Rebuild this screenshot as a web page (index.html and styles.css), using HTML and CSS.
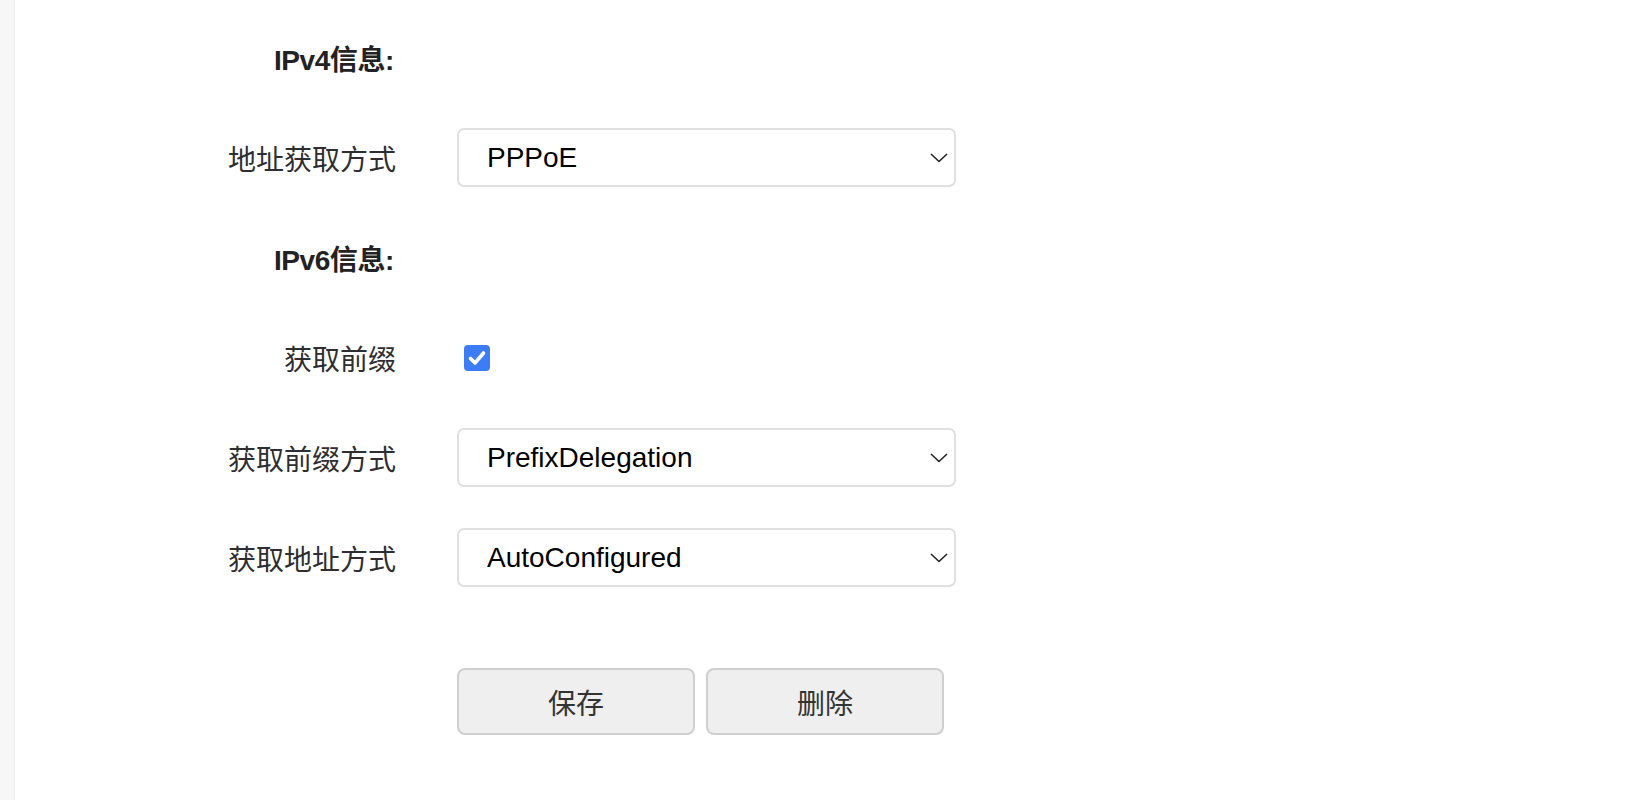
FILE: index.html
```html
<!DOCTYPE html>
<html lang="zh-CN">
<head>
<meta charset="utf-8">
<title>WAN 设置</title>
<link rel="stylesheet" href="styles.css">
</head>
<body>
<div class="panel">
  <form class="form">
    <div class="row">
      <div class="label heading">IPv4信息:</div>
    </div>
    <div class="row">
      <div class="label">地址获取方式</div>
      <div class="select-wrap">
        <select class="select"><option>PPPoE</option></select>
        <svg class="chevron" width="18" height="10" viewBox="0 0 18 10"><path d="M1 1 L9 8.5 L17 1" fill="none" stroke="#222" stroke-width="1.6"/></svg>
      </div>
    </div>
    <div class="row">
      <div class="label heading">IPv6信息:</div>
    </div>
    <div class="row">
      <div class="label">获取前缀</div>
      <span class="checkbox" role="checkbox" aria-checked="true">
        <svg width="26" height="26" viewBox="0 0 26 26"><rect width="26" height="26" rx="4" fill="#3c7cf5"/><path d="M6.5 13.5 L11 18 L19.5 8" fill="none" stroke="#fff" stroke-width="3.6" stroke-linecap="round" stroke-linejoin="round"/></svg>
      </span>
    </div>
    <div class="row">
      <div class="label">获取前缀方式</div>
      <div class="select-wrap">
        <select class="select"><option>PrefixDelegation</option></select>
        <svg class="chevron" width="18" height="10" viewBox="0 0 18 10"><path d="M1 1 L9 8.5 L17 1" fill="none" stroke="#222" stroke-width="1.6"/></svg>
      </div>
    </div>
    <div class="row">
      <div class="label">获取地址方式</div>
      <div class="select-wrap">
        <select class="select"><option>AutoConfigured</option></select>
        <svg class="chevron" width="18" height="10" viewBox="0 0 18 10"><path d="M1 1 L9 8.5 L17 1" fill="none" stroke="#222" stroke-width="1.6"/></svg>
      </div>
    </div>
    <div class="row actions">
      <div class="label"></div>
      <div class="buttons">
        <button type="button" class="btn">保存</button>
        <button type="button" class="btn">删除</button>
      </div>
    </div>
  </form>
</div>
</body>
</html>
```
FILE: styles.css
```css
html, body {
  margin: 0;
  padding: 0;
}
body {
  background: #f7f7f7;
  font-family: "Liberation Sans", "Noto Sans CJK SC", sans-serif;
  color: #303030;
  overflow: hidden;
}
.panel {
  margin-left: 15px;
  background: #fff;
  min-height: 800px;
  box-shadow: 0 0 3px rgba(0, 0, 0, 0.09);
}
.form {
  display: flex;
  flex-direction: column;
  gap: 41px;
  padding-top: 28px;
}
.row {
  display: flex;
  align-items: center;
  height: 59px;
}
.label {
  width: 381px;
  flex: none;
  margin-right: 61px;
  text-align: right;
  font-size: 28px;
  color: #2e2e30;
  font-family: "Liberation Sans", "Noto Sans CJK SC", sans-serif;
}
.heading {
  font-weight: bold;
  color: #222;
  letter-spacing: -0.4px;
  padding-right: 2px;
  box-sizing: border-box;
}
.select-wrap {
  position: relative;
  width: 499px;
  height: 59px;
}
.select {
  appearance: none;
  -webkit-appearance: none;
  width: 100%;
  height: 100%;
  box-sizing: border-box;
  border: 2px solid #e0e0e0;
  border-radius: 7px;
  background: #fff;
  padding: 0 40px 0 28px;
  font-family: "Liberation Sans", sans-serif;
  font-size: 28px;
  color: #000;
  outline: none;
}
.chevron {
  position: absolute;
  right: 8px;
  top: 25px;
  pointer-events: none;
}
.checkbox {
  display: flex;
  width: 26px;
  height: 26px;
  margin-left: 7px;
}
.actions {
  margin-top: 40px;
  height: 67px;
}
.buttons {
  display: flex;
  gap: 11px;
}
.btn {
  width: 238px;
  height: 67px;
  box-sizing: border-box;
  background: #efefef;
  border: 2px solid #cfcfcf;
  border-radius: 8px;
  font-family: "Noto Sans CJK SC", sans-serif;
  font-size: 28px;
  color: #333;
  padding: 0;
}
```
